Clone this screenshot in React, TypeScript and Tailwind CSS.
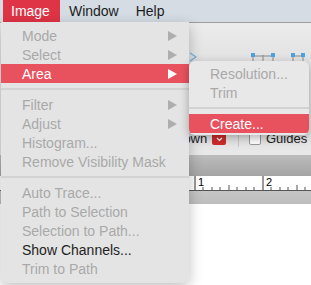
import React from "react";

type Item = { label: string; enabled?: boolean; sub?: boolean; active?: boolean } | "sep";

const mainItems: Item[] = [
  { label: "Mode", sub: true },
  { label: "Select", sub: true },
  { label: "Area", sub: true, enabled: true, active: true },
  "sep",
  { label: "Filter", sub: true },
  { label: "Adjust", sub: true },
  { label: "Histogram..." },
  { label: "Remove Visibility Mask" },
  "sep",
  { label: "Auto Trace..." },
  { label: "Path to Selection" },
  { label: "Selection to Path..." },
  { label: "Show Channels...", enabled: true },
  { label: "Trim to Path" },
];

const subItems: Item[] = [
  { label: "Resolution..." },
  { label: "Trim" },
  "sep",
  { label: "Create...", enabled: true, active: true },
];

function Arrow({ white }: { white?: boolean }) {
  return (
    <svg width="9" height="10" viewBox="0 0 9 10" className="shrink-0">
      <path d="M0 0 L9 5 L0 10 Z" fill={white ? "#ffffff" : "#aeaeae"} />
    </svg>
  );
}

function MenuList({ items, pl }: { items: Item[]; pl: string }) {
  return (
    <>
      {items.map((it, i) =>
        it === "sep" ? (
          <div key={i} className="h-[12px] flex items-center">
            <div className="w-full h-[2px] bg-[#d3d3d3]" />
          </div>
        ) : (
          <div
            key={i}
            className={`h-[19px] flex items-center justify-between pr-[12px] ${pl} ${
              it.active ? "bg-[#e8525f] text-white" : it.enabled ? "text-[#1e1e1e]" : "text-[#a9a9a9]"
            }`}
          >
            <span className="leading-none">{it.label}</span>
            {it.sub && <Arrow white={it.active} />}
          </div>
        )
      )}
    </>
  );
}

export default function App() {
  return (
    <div
      className="relative w-[311px] h-[285px] overflow-hidden bg-white text-[14px]"
      style={{ fontFamily: '"Liberation Sans", Arial, sans-serif' }}
    >
      {/* menu bar */}
      <div className="h-[22px] bg-[#d5dce4] flex items-center pl-[3px] text-[#1c1c1c]">
        <div className="h-full pl-[8px] pr-[10px] flex items-center bg-[#df3446] text-white">Image</div>
        <div className="ml-[9px]">Window</div>
        <div className="ml-[17px]">Help</div>
      </div>

      {/* background window */}
      <div className="h-[1px] bg-[#9c9c9c]" />
      <div className="h-[37px] bg-gradient-to-b from-[#ececec] to-[#e2e2e2] relative">
        <svg className="absolute left-[186px] top-[28px]" width="125" height="12" viewBox="0 0 125 12">
          <path d="M4 2 L10 6 L4 10" stroke="#6fb3e0" strokeWidth="1.2" fill="none" />
          <path d="M67 4 V12 M77 4 V12 M87 4 V12 M67 5 H87" stroke="#8a8a8a" strokeWidth="1" fill="none" />
          <path d="M107 4 V12 M117 4 V12 M107 5 H117" stroke="#8a8a8a" strokeWidth="1" fill="none" />
          <rect x="65" y="2" width="4" height="4" fill="#4aa3e0" />
          <rect x="85" y="2" width="4" height="4" fill="#4aa3e0" />
          <rect x="105" y="2" width="4" height="4" fill="#4aa3e0" />
          <rect x="115" y="2" width="4" height="4" fill="#4aa3e0" />
        </svg>
      </div>
      <div className="h-[68px] bg-[#e4e4e4]" />
      <div className="h-[22px] bg-[#e6e6e6] flex items-center pl-[174px] text-[13px] text-[#222]">
        <span className="w-[38px] shrink-0">Down</span>
        <div className="w-[14px] h-[12px] shrink-0 rounded-[2px] bg-[#cf2b2b] flex items-center justify-center">
          <svg width="7" height="5" viewBox="0 0 7 5">
            <path d="M1 1 L3.5 3.5 L6 1" stroke="#fff" strokeWidth="1.2" fill="none" />
          </svg>
        </div>
        <div className="w-[1px] h-[16px] shrink-0 bg-[#c8c8c8] ml-[12px]" />
        <div className="w-[12px] h-[12px] shrink-0 rounded-[2px] border border-[#9a9a9a] bg-white ml-[10px]" />
        <span className="ml-[5px] shrink-0">Guides</span>
      </div>
      <div className="h-[5px] bg-[#e8e8e8]" />
      <div className="h-[21px] bg-gradient-to-b from-[#bcbcbc] to-[#a4a4a4]" />
      <div className="h-[15px] bg-white relative border-b border-[#6a6a6a]">
        <svg className="absolute left-0 top-0" width="311" height="15" viewBox="0 0 311 15">
          <path d="M195 0 V15 M263 0 V15" stroke="#7a7a7a" strokeWidth="1.5" />
          {[203, 212, 220, 229, 237, 246, 254, 271, 280, 288, 297, 305].map((x) => (
            <path key={x} d={`M${x} ${x === 229 || x === 297 ? 9 : 11} V15`} stroke="#555" strokeWidth="1" />
          ))}
          <path d="M190 14.5 H311" stroke="#555" strokeWidth="1" />
        </svg>
        <span className="absolute left-[198px] top-[1px] text-[11px] leading-none text-black">1</span>
        <span className="absolute left-[266px] top-[1px] text-[11px] leading-none text-black">2</span>
      </div>
      <div className="h-[13px] bg-gradient-to-b from-[#c6c6c6] to-[#bdbdbd]" />

      {/* Image menu */}
      <div className="absolute left-[1px] top-[22px] w-[188px] pt-[4px] pb-[5px] bg-[#e4e4e4] rounded-b-[6px] shadow-[0_4px_14px_rgba(0,0,0,0.25)]">
        <MenuList items={mainItems} pl="pl-[21px]" />
      </div>

      {/* Area submenu */}
      <div className="absolute left-[189px] top-[61px] w-[120px] pt-[3px] pb-[2px] bg-[#e8e8e8] rounded-[6px] shadow-[0_3px_10px_rgba(0,0,0,0.3)] overflow-hidden">
        <MenuList items={subItems} pl="pl-[21px]" />
      </div>
    </div>
  );
}
